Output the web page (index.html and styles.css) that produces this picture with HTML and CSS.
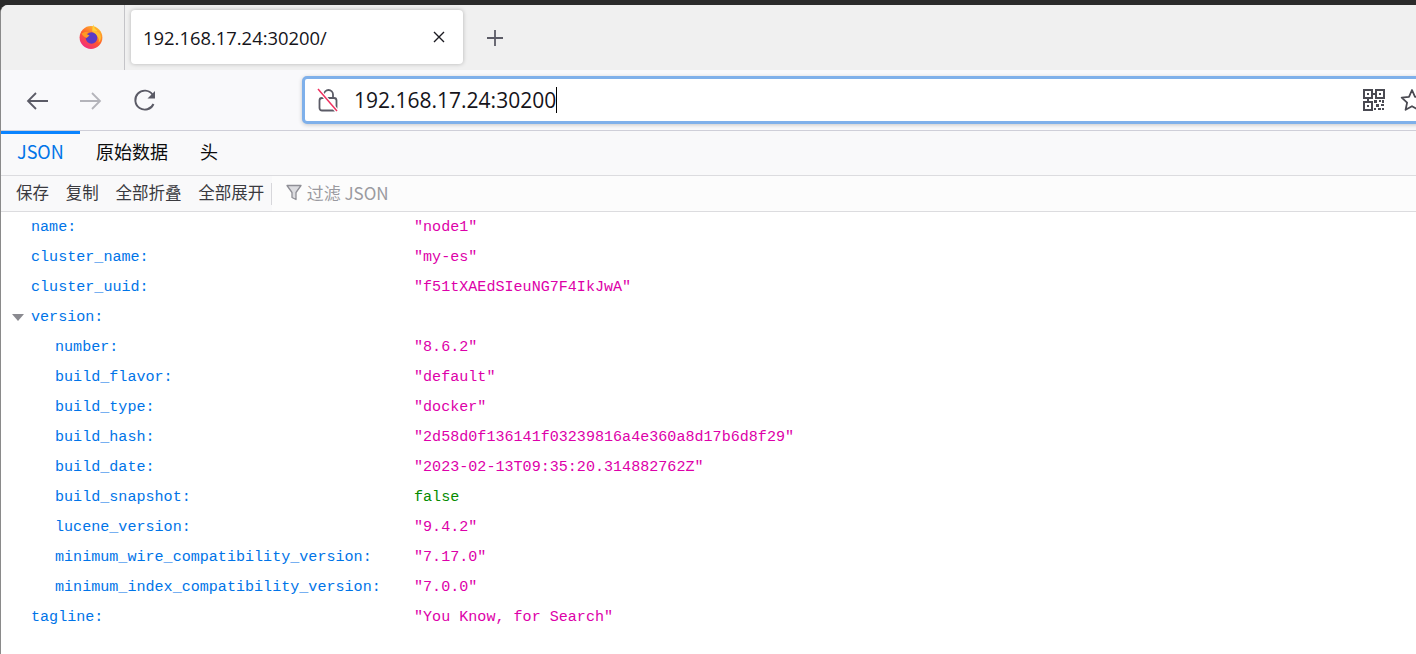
FILE: index.html
```html
<!DOCTYPE html>
<html lang="en">
<head>
    <meta charset="UTF-8">
    <meta name="viewport" content="width=device-width, initial-scale=1.0">
    <title>192.168.17.24:30200/</title>
    <link rel="stylesheet" href="styles.css">
</head>

<body>
    <div class="window">
        <!-- tab strip -->
        <div class="tab-strip">
            <div class="pinned-tab">
                <svg class="firefox-logo" width="24" height="26" viewBox="0 0 24 26">
                    <defs>
                        <linearGradient id="foxBody" x1="0.8" y1="0.1" x2="0.2" y2="1">
                            <stop offset="0" stop-color="#ffb52c"/>
                            <stop offset="0.5" stop-color="#ff5a2c"/>
                            <stop offset="1" stop-color="#f0258c"/>
                        </linearGradient>
                    </defs>
                    <circle cx="12" cy="14.5" r="11.4" fill="url(#foxBody)"/>
                    <path d="M15 1.5c-.4 3 1 4.600 3.500 6.500l-5 .5C13 6 13.500 3.500 15 1.500z" fill="#ffd23c"/>
                    <path d="M13 7.500c5-.5 9 2.500 9 7 0 2-1 4-2.500 5.300 1-2.500.3-5.500-2-7.300-1.500-1.300-3-2.500-4.500-5z" fill="#ffbd2e"/>
                    <circle cx="12.500" cy="15" r="5.800" fill="#5a3bc4"/>
                    <path d="M2.500 10.500c2-1.500 4.500-2 7-1.200L7.500 11l3 1.500-3 2.500c-2-1-4-2.500-5-4.500z" fill="#ff9a24"/>
                </svg>
            </div>
            <div class="active-tab">
                <span class="tab-title">192.168.17.24:30200/</span>
                <svg class="tab-close" width="12" height="12" viewBox="0 0 12 12">
                    <path d="M1 1l10 10M11 1L1 11" stroke="#1c1b22" stroke-width="1.400" fill="none"/>
                </svg>
            </div>
            <svg class="new-tab" width="18" height="18" viewBox="0 0 18 18">
                <path d="M9 1v16M1 9h16" stroke="#5b5b66" stroke-width="1.800" fill="none"/>
            </svg>
        </div>

        <!-- nav bar -->
        <div class="nav-bar">
            <svg class="nav-icon" width="24" height="20" viewBox="0 0 24 20">
                <path d="M23 10H3M11 2l-8 8 8 8" stroke="#5b5b66" stroke-width="1.800" fill="none"/>
            </svg>
            <svg class="nav-icon" width="24" height="20" viewBox="0 0 24 20">
                <path d="M1 10h20M13 2l8 8-8 8" stroke="#b4b4ba" stroke-width="1.800" fill="none"/>
            </svg>
            <svg class="nav-icon" width="24" height="24" viewBox="0 0 24 24">
                <path d="M20.500 15a9.500 9.500 0 1 1-1-9.500" stroke="#5b5b66" stroke-width="1.900" fill="none"/>
                <path d="M22 2v7.500h-7.500z" fill="#5b5b66"/>
            </svg>
            <div class="url-bar">
                <svg class="lock-icon" width="22" height="26" viewBox="0 0 22 26">
                    <path d="M7 11V7.500a4.500 4.500 0 0 1 9 0V11" stroke="#5b5b66" stroke-width="1.800" fill="none"/>
                    <rect x="2.500" y="11" width="17" height="12.500" rx="2.500" stroke="#5b5b66" stroke-width="1.800" fill="none"/>
                    <path d="M1 2l19 22" stroke="#ffffff" stroke-width="4" fill="none"/>
                    <path d="M1 2l19 22" stroke="#f0305f" stroke-width="1.500" fill="none"/>
                </svg>
                <span class="url-text">192.168.17.24:30200</span>
                <span class="caret"></span>
                <svg class="qr-icon" width="22" height="22" viewBox="0 0 22 22">
                    <path d="M1 1h8v8H1zM13 1h8v8h-8zM1 13h8v8H1z" stroke="#4a4a52" stroke-width="2" fill="none"/>
                    <path d="M4 4h2v2H4zM16 4h2v2h-2zM4 16h2v2H4zM9 4h4v2H9zM4 9h2v4H4zM11 11h3v3h-3zM16 11h2v2h-2zM19 11h2v3h-2zM13 15h3v3h-3zM18 15h3v2h-3zM11 19h2v2h-2zM15 19h3v2h-3zM19 19h2v2h-2z" fill="#4a4a52"/>
                </svg>
                <svg class="star-icon" width="24" height="24" viewBox="0 0 24 24">
                    <path d="M12 2l3 6.800 7.300.8-5.400 5 1.500 7.200L12 18.200l-6.400 3.600 1.500-7.200-5.400-5 7.300-.8z" stroke="#4a4a52" stroke-width="1.800" stroke-linejoin="round" fill="none"/>
                </svg>
            </div>
        </div>

        <!-- json viewer tabs -->
        <div class="viewer-tabs">
            <div class="viewer-tab selected">JSON</div>
            <div class="viewer-tab">原始数据</div>
            <div class="viewer-tab">头</div>
        </div>

        <div class="viewer-toolbar">
            <button class="tool-button">保存</button>
            <button class="tool-button">复制</button>
            <button class="tool-button">全部折叠</button>
            <button class="tool-button">全部展开</button>
            <div class="tool-sep"></div>
            <div class="filter">
                <svg width="16" height="17" viewBox="0 0 16 17">
                    <path d="M1 1.500h14L10 8.500v7l-4-2v-5z" stroke="#8f8f96" stroke-width="1.300" fill="#dcdce0" stroke-linejoin="round"/>
                </svg>
                <span>过滤 JSON</span>
            </div>
        </div>

        <!-- json rows -->
        <div class="json-tree">
            <div class="row"><span class="key">name:</span><span class="str">"node1"</span></div>
            <div class="row"><span class="key">cluster_name:</span><span class="str">"my-es"</span></div>
            <div class="row"><span class="key">cluster_uuid:</span><span class="str">"f51tXAEdSIeuNG7F4IkJwA"</span></div>
            <div class="row"><span class="key"><span class="twisty"></span>version:</span></div>
            <div class="row"><span class="key nested">number:</span><span class="str">"8.6.2"</span></div>
            <div class="row"><span class="key nested">build_flavor:</span><span class="str">"default"</span></div>
            <div class="row"><span class="key nested">build_type:</span><span class="str">"docker"</span></div>
            <div class="row"><span class="key nested">build_hash:</span><span class="str">"2d58d0f136141f03239816a4e360a8d17b6d8f29"</span></div>
            <div class="row"><span class="key nested">build_date:</span><span class="str">"2023-02-13T09:35:20.314882762Z"</span></div>
            <div class="row"><span class="key nested">build_snapshot:</span><span class="bool">false</span></div>
            <div class="row"><span class="key nested">lucene_version:</span><span class="str">"9.4.2"</span></div>
            <div class="row"><span class="key nested">minimum_wire_compatibility_version:</span><span class="str">"7.17.0"</span></div>
            <div class="row"><span class="key nested">minimum_index_compatibility_version:</span><span class="str">"7.0.0"</span></div>
            <div class="row"><span class="key">tagline:</span><span class="str">"You Know, for Search"</span></div>
        </div>
    </div>
</body>

</html>
```

FILE: styles.css
```css
* {
    box-sizing: border-box;
}

html,
body {
    margin: 0;
    padding: 0;
    height: 100%;
    overflow: hidden;
    background-color: #2b2b2b;
}

body {
    padding-top: 5px;
    font-family: "Noto Sans CJK SC", "Open Sans", "Liberation Sans", sans-serif;
}

.window {
    height: 649px;
    background-color: #ffffff;
    border-top-left-radius: 8px;
    border-left: 1px solid #8a8a8a;
    overflow: hidden;
}

.tab-strip {
    display: flex;
    align-items: center;
    height: 65px;
    background-color: #f0f0f0;
}

.pinned-tab {
    display: flex;
    align-items: center;
    justify-content: flex-end;
    width: 124px;
    height: 65px;
    padding-right: 21px;
    padding-bottom: 3px;
    border-right: 1px solid #c4c4c8;
}

.active-tab {
    display: flex;
    align-items: center;
    justify-content: space-between;
    width: 332px;
    height: 54px;
    margin-left: 6px;
    margin-bottom: 1px;
    padding: 0 18px 0 12px;
    background-color: #ffffff;
    border-radius: 4px;
    box-shadow: 0 0 4px rgba(0, 0, 0, 0.25);
}

.tab-title {
    font-family: "Open Sans", "Liberation Sans", sans-serif;
    font-size: 18.400px;
    color: #15141a;
}

.new-tab {
    margin-left: 23px;
}

.nav-bar {
    display: flex;
    align-items: center;
    height: 61px;
    padding-left: 24px;
    background-color: #f9f9fb;
    border-bottom: 1px solid #cfcfd8;
}

.nav-icon {
    flex: none;
    margin-top: 2px;
    margin-right: 30px;
}

.url-bar {
    flex: none;
    display: flex;
    align-items: center;
    width: 1133px;
    height: 48px;
    margin-left: 115px;
    padding-left: 12px;
    background-color: #ffffff;
    border: 3px solid #7fb0ea;
    border-radius: 5px;
    box-shadow: 0 1px 4px rgba(0, 0, 0, 0.2);
}

.lock-icon {
    flex: none;
}

.url-text {
    margin-left: 15px;
    font-family: "Open Sans", "Liberation Sans", sans-serif;
    font-size: 21px;
    color: #15141a;
}

.caret {
    width: 1px;
    height: 26px;
    background-color: #000000;
}

.qr-icon {
    flex: none;
    margin-left: auto;
}

.star-icon {
    flex: none;
    margin-left: 15px;
    margin-right: 8px;
}

.viewer-tabs {
    display: flex;
    height: 45px;
    background-color: #f9f9fa;
    border-bottom: 1px solid #dcdcdf;
}

.viewer-tab {
    padding: 0 16px 0 16px;
    font-size: 18px;
    line-height: 34px;
    border-top: 3px solid transparent;
    color: #0c0c0d;
}

.viewer-tab.selected {
    width: 79px;
    color: #0074e8;
    border-top-color: #0a84ff;
}

.viewer-toolbar {
    display: flex;
    align-items: center;
    height: 36px;
    padding-left: 6.600px;
    background-color: #f9f9fa;
    border-bottom: 1px solid #dcdcdf;
}

.tool-button {
    height: 28px;
    padding: 0 8.400px 3px;
    border: none;
    background: none;
    font-family: "Noto Sans CJK SC", sans-serif;
    font-size: 16.500px;
    color: #3a3a3f;
}

.tool-sep {
    width: 1px;
    height: 22px;
    margin-left: -2px;
    background-color: #d7d7db;
}

.filter {
    flex: 1;
    display: flex;
    align-items: center;
    gap: 5px;
    height: 35px;
    padding-left: 14px;
    padding-bottom: 2px;
    font-size: 17px;
    color: #9a9aa0;
    background-color: #fcfcfc;
}

.json-tree {
    font-family: "Liberation Mono", monospace;
    font-size: 15.080px;
}

.row {
    display: flex;
    align-items: center;
    height: 30px;
    line-height: 30px;
}

.key {
    position: relative;
    width: 413px;
    padding-left: 30px;
    color: #0074e8;
    white-space: nowrap;
}

.key.nested {
    padding-left: 54px;
}

.twisty {
    position: absolute;
    left: 11px;
    top: 12px;
    width: 0;
    height: 0;
    border-left: 6px solid transparent;
    border-right: 6px solid transparent;
    border-top: 7px solid #8a8a90;
}

.str {
    color: #dd00a9;
}

.bool {
    color: #058b00;
}
```
